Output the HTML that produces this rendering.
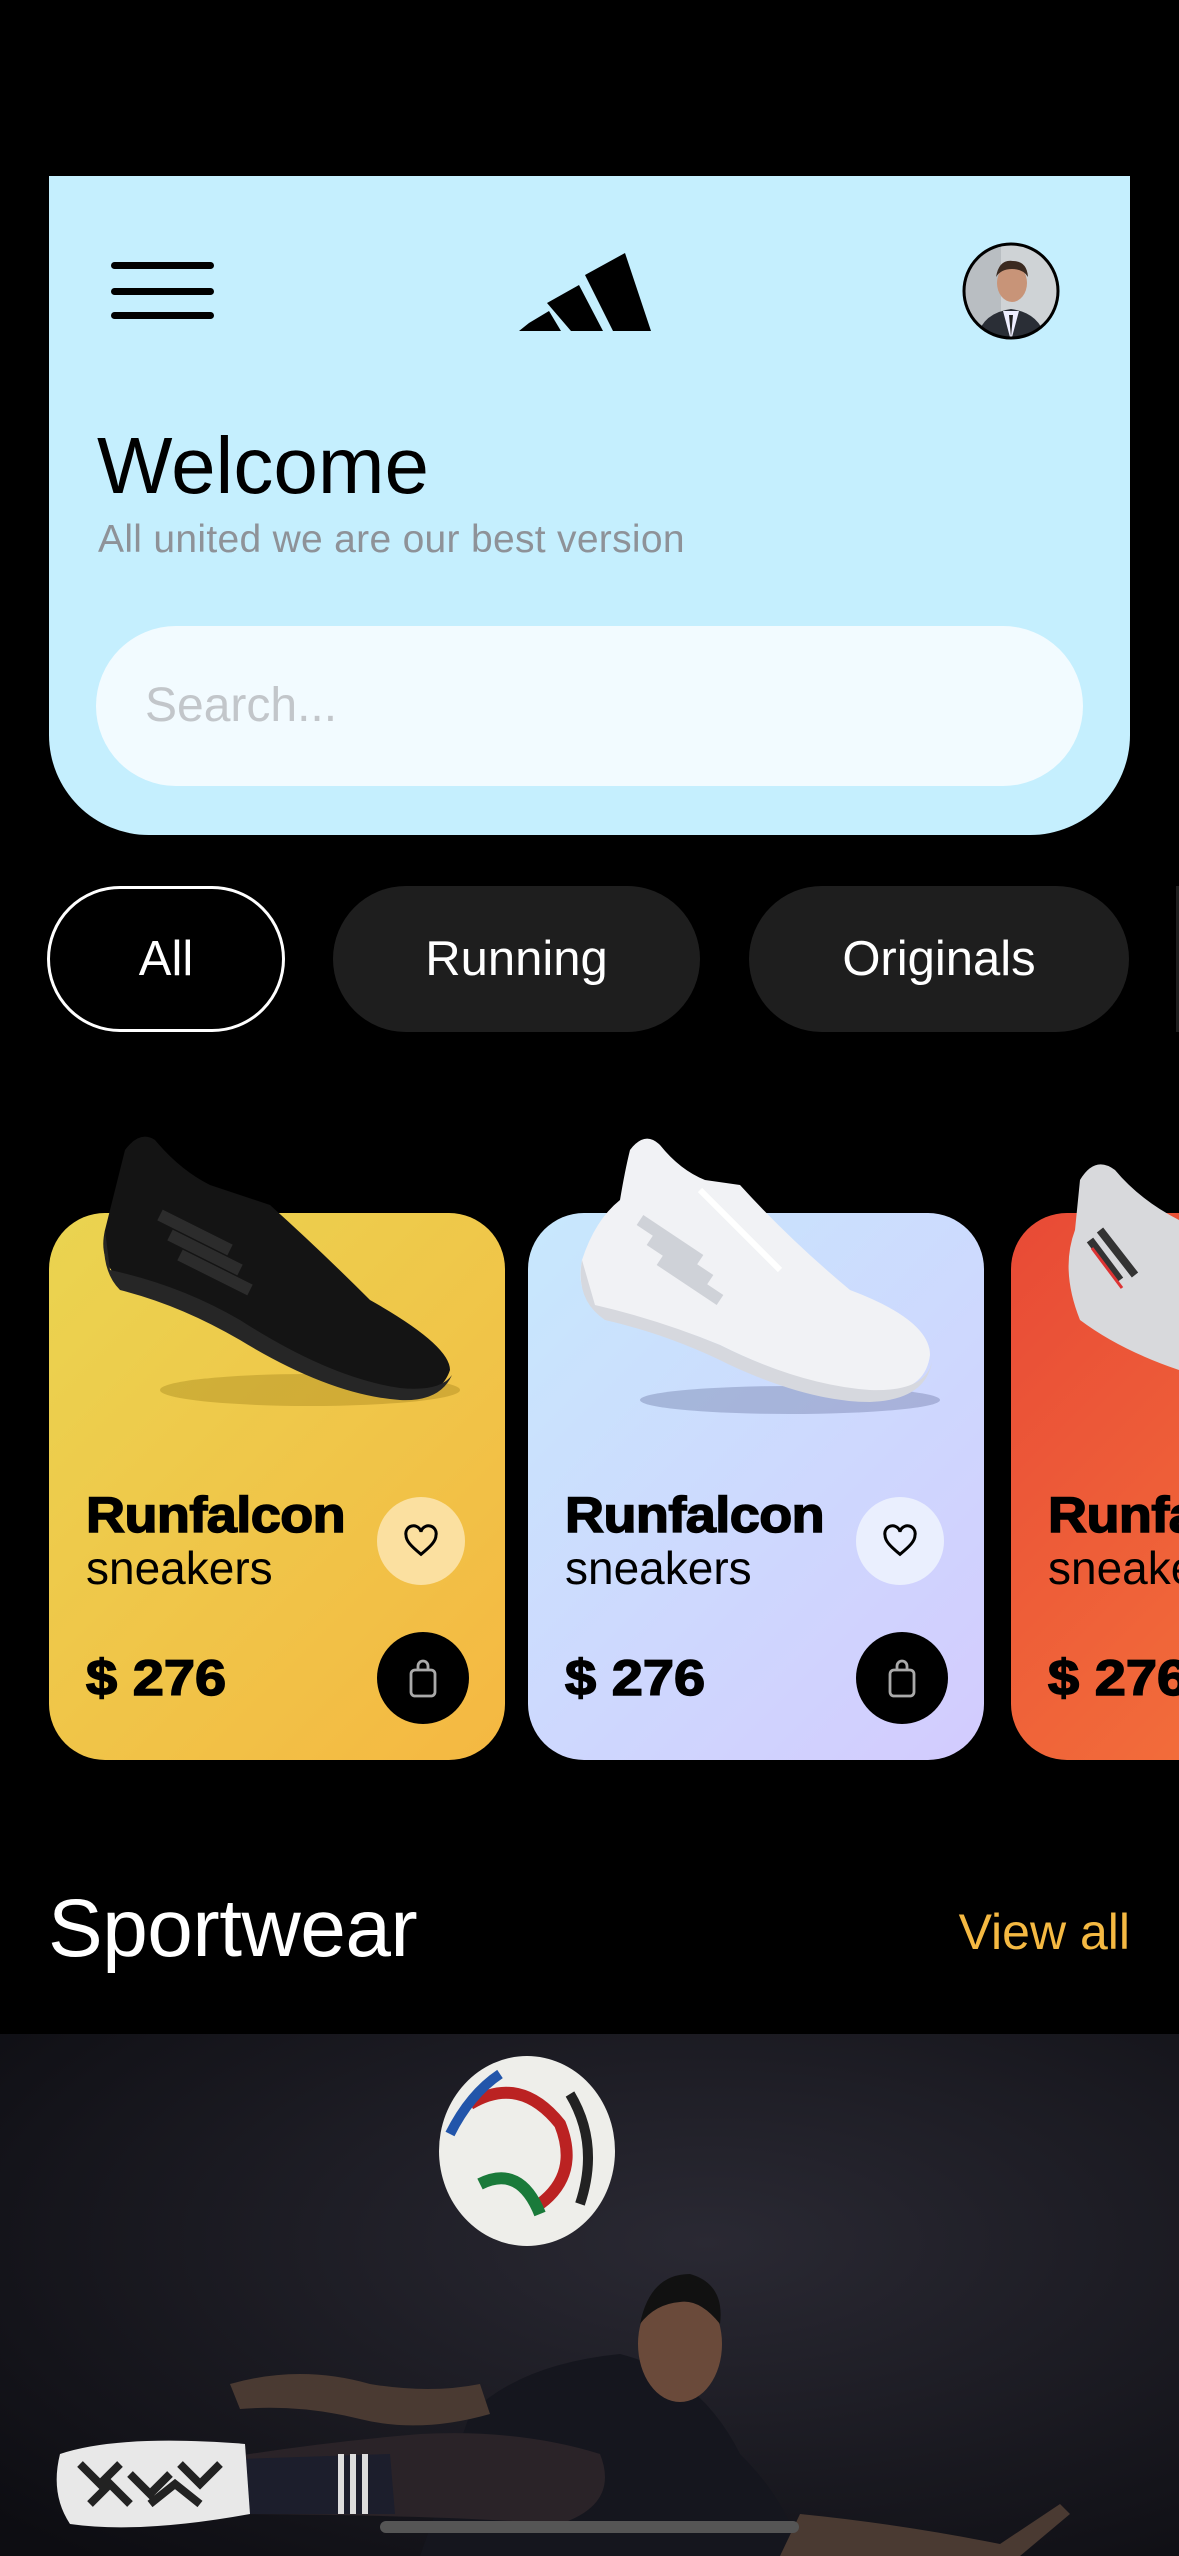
<!DOCTYPE html>
<html><head><meta charset="utf-8"><style>
*{margin:0;padding:0;box-sizing:border-box}
html,body{width:1179px;height:2556px;overflow:hidden;background:#000}
body{font-family:"Liberation Sans",sans-serif}
#w{position:relative;width:1179px;height:2556px;overflow:hidden}
.abs{position:absolute}
.hdr{left:49px;top:176px;width:1081px;height:659px;background:#c5effe;border-radius:0 0 100px 100px}
.bar{left:111px;width:103px;height:7px;background:#000;border-radius:4px}
.chip{top:886px;height:146px;border-radius:73px;background:#1e1e1e;color:#fff;font-size:49px;display:flex;align-items:center;justify-content:center}
.card{top:1213px;height:547px;width:456px;border-radius:56px;overflow:hidden}
.t1{font-size:50px;font-weight:bold;letter-spacing:-0.5px;position:absolute;left:37px;top:273px;transform:scaleX(1.08);transform-origin:left;-webkit-text-stroke:1.5px #000}
.t2{font-size:46px;position:absolute;left:37px;top:328px}
.pr{font-size:50px;font-weight:bold;position:absolute;left:37px;top:436px;transform:scaleX(1.12);transform-origin:left;-webkit-text-stroke:1.5px #000}
.hc{position:absolute;left:328px;top:284px;width:88px;height:88px;border-radius:50%;display:flex;align-items:center;justify-content:center}
.bc{position:absolute;left:328px;top:419px;width:92px;height:92px;border-radius:50%;background:#000;display:flex;align-items:center;justify-content:center}
</style></head><body><div id="w">
<div class="abs hdr"></div>
<div class="abs bar" style="top:262px"></div>
<div class="abs bar" style="top:288px"></div>
<div class="abs bar" style="top:312px"></div>
<svg class="abs" style="left:517px;top:253px" width="134" height="78" viewBox="0 0 134 78">
<polygon points="2,78 12,70 32,58 44,78" fill="#000"/>
<polygon points="30,50 62,32 86,78 54,78" fill="#000"/>
<polygon points="68,22 108,0 134,78 96,78" fill="#000"/>
</svg>
<svg class="abs" style="left:961px;top:241px" width="100" height="100" viewBox="0 0 100 100">
<defs><clipPath id="av"><circle cx="50" cy="50" r="46"/></clipPath></defs>
<g clip-path="url(#av)"><rect width="100" height="100" fill="#cfd3d6"/>
<rect x="0" y="0" width="40" height="100" fill="#b9bec2"/>
<path d="M15 100 Q20 72 50 68 Q80 72 85 100Z" fill="#2a2e36"/>
<path d="M42 70 L50 100 L58 70Z" fill="#eef"/><path d="M48 74 L50 96 L52 74Z" fill="#222"/>
<ellipse cx="51" cy="42" rx="15" ry="19" fill="#c89478"/>
<path d="M35 36 Q38 18 52 20 Q66 20 67 36 Q62 28 51 28 Q40 28 35 36Z" fill="#3b2a20"/></g>
<circle cx="50" cy="50" r="47" fill="none" stroke="#000" stroke-width="3"/>
</svg>
<div class="abs" style="left:97px;top:420px;font-size:80px;color:#000;letter-spacing:0px">Welcome</div>
<div class="abs" style="left:98px;top:518px;font-size:39px;color:#8e9298;letter-spacing:0.3px">All united we are our best version</div>
<div class="abs" style="left:96px;top:626px;width:987px;height:160px;border-radius:80px;background:#f2fbff"></div>
<div class="abs" style="left:145px;top:678px;font-size:48px;color:#c2c6ca">Search...</div>

<div class="abs chip" style="left:47px;width:238px;background:#000;border:3px solid #fff">All</div>
<div class="abs chip" style="left:333px;width:367px">Running</div>
<div class="abs chip" style="left:749px;width:380px">Originals</div>
<div class="abs chip" style="left:1176px;width:3px;border-radius:0"></div>

<div class="abs card" style="left:49px;background:linear-gradient(135deg,#ead450,#f5b842)">
<div class="t1">Runfalcon</div><div class="t2">sneakers</div><div class="pr">$ 276</div>
<div class="hc" style="background:#fbe0a0"><svg width="40" height="40" viewBox="0 0 24 24"><path d="M12 20 C6 15 3 12 3 8.5 A4.5 4.5 0 0 1 12 6.5 A4.5 4.5 0 0 1 21 8.5 C21 12 18 15 12 20Z" fill="none" stroke="#000" stroke-width="1.8"/></svg></div>
<div class="bc"><svg width="36" height="40" viewBox="0 0 18 20"><rect x="3" y="6" width="12" height="13" rx="2" fill="none" stroke="#aaa" stroke-width="1.4"/><path d="M6.5 6 V4 A2.5 2.5 0 0 1 11.5 4 V6" fill="none" stroke="#aaa" stroke-width="1.4"/></svg></div>
</div>
<div class="abs card" style="left:528px;background:linear-gradient(135deg,#c7e8fd,#d3cbfe)">
<div class="t1">Runfalcon</div><div class="t2">sneakers</div><div class="pr">$ 276</div>
<div class="hc" style="background:#eaeffe"><svg width="40" height="40" viewBox="0 0 24 24"><path d="M12 20 C6 15 3 12 3 8.5 A4.5 4.5 0 0 1 12 6.5 A4.5 4.5 0 0 1 21 8.5 C21 12 18 15 12 20Z" fill="none" stroke="#000" stroke-width="1.8"/></svg></div>
<div class="bc"><svg width="36" height="40" viewBox="0 0 18 20"><rect x="3" y="6" width="12" height="13" rx="2" fill="none" stroke="#aaa" stroke-width="1.4"/><path d="M6.5 6 V4 A2.5 2.5 0 0 1 11.5 4 V6" fill="none" stroke="#aaa" stroke-width="1.4"/></svg></div>
</div>
<div class="abs card" style="left:1011px;width:168px;border-radius:56px 0 0 56px;background:linear-gradient(135deg,#e84a36,#f26c3a)">
<div class="t1">Runfalcon</div><div class="t2">sneakers</div><div class="pr">$ 276</div>
</div>

<svg class="abs" style="left:80px;top:1130px" width="380" height="300" viewBox="0 0 380 300">
<ellipse cx="230" cy="260" rx="150" ry="16" fill="rgba(120,90,0,0.25)"/>
<path d="M45 20 Q60 0 75 10 Q100 40 130 55 L190 75 Q240 120 290 170 Q370 215 370 240 Q360 270 320 262 Q250 250 160 195 Q100 160 40 150 Q18 130 25 100 Q35 60 45 20Z" fill="#141414"/>
<path d="M25 100 Q20 140 40 160 Q100 175 160 210 Q250 265 320 270 Q360 272 372 245 Q360 262 320 258 Q250 248 160 190 Q100 155 30 140Z" fill="#262626"/>
<path d="M80 85 L150 120 M90 105 L160 140 M100 125 L170 160" stroke="#2c2c2c" stroke-width="12"/>
</svg>
<svg class="abs" style="left:570px;top:1130px" width="380" height="300" viewBox="0 0 380 300">
<ellipse cx="220" cy="270" rx="150" ry="14" fill="rgba(80,90,140,0.3)"/>
<path d="M60 20 Q75 0 90 15 Q110 40 135 50 L170 55 Q220 110 280 160 Q360 190 360 225 Q355 265 300 262 Q230 255 150 215 Q90 190 30 180 Q5 165 12 130 Q25 90 50 70 Q55 40 60 20Z" fill="#f1f2f5"/>
<path d="M12 130 Q5 170 35 190 Q100 205 160 235 Q240 272 300 272 Q355 270 362 232 Q355 262 300 260 Q230 255 150 215 Q90 190 25 175Z" fill="#d6d8de"/>
<path d="M70 90 L130 130 M80 110 L140 150 M90 130 L150 170" stroke="#cfd2d8" stroke-width="12"/>
<path d="M130 60 L210 140" stroke="#fff" stroke-width="6"/>
</svg>
<svg class="abs" style="left:1060px;top:1150px" width="119" height="230" viewBox="0 0 119 230">
<path d="M20 30 Q35 5 55 20 Q80 50 119 70 L119 220 Q60 200 20 170 Q0 120 15 80Z" fill="#d8d9dc"/>
<path d="M30 90 L60 130 M40 80 L75 125" stroke="#333" stroke-width="8"/>
<path d="M32 98 L62 138" stroke="#d33" stroke-width="3"/>
</svg>

<div class="abs" style="left:48px;top:1882px;font-size:82px;color:#fff;letter-spacing:-0.5px">Sportwear</div>
<div class="abs" style="right:49px;top:1903px;font-size:50px;color:#f5b942">View all</div>

<svg class="abs" style="left:0;top:2034px" width="1179" height="522" viewBox="0 0 1179 522">
<defs><radialGradient id="bg" cx="0.6" cy="0.4" r="0.8"><stop offset="0" stop-color="#2a2933"/><stop offset="1" stop-color="#0d0d12"/></radialGradient></defs>
<rect width="1179" height="522" fill="url(#bg)"/>
<ellipse cx="527" cy="117" rx="88" ry="95" fill="#eeeeea"/>
<path d="M470 70 Q520 40 560 90 Q580 140 540 170" fill="none" stroke="#b22" stroke-width="12"/>
<path d="M480 150 Q520 130 540 180" fill="none" stroke="#1a7a3a" stroke-width="12"/>
<path d="M450 100 Q470 60 500 40" fill="none" stroke="#2255aa" stroke-width="10"/>
<path d="M570 60 Q600 110 580 170" fill="none" stroke="#222" stroke-width="10"/>
<path d="M420 522 L470 380 Q520 330 620 320 Q700 340 740 420 Q790 470 800 522Z" fill="#15161e"/>
<path d="M230 350 Q300 330 370 350 Q430 360 480 350 L490 380 Q420 400 360 385 Q300 370 240 375Z" fill="#4a3a32"/>
<ellipse cx="680" cy="310" rx="42" ry="58" fill="#6a4a3a"/>
<path d="M640 290 Q650 240 690 240 Q725 250 720 290 Q700 265 680 268 Q655 270 640 290Z" fill="#111"/>
<path d="M190 430 Q300 410 420 400 Q520 395 600 420 Q620 470 560 490 Q420 480 200 480Z" fill="#2a2328"/>
<path d="M240 425 L390 420 L395 480 L245 480Z" fill="#1c1e2c"/>
<rect x="338" y="420" width="6" height="60" fill="#ddd"/><rect x="350" y="420" width="6" height="60" fill="#ddd"/><rect x="362" y="420" width="6" height="60" fill="#ddd"/>
<path d="M60 420 Q120 400 245 410 L250 480 Q140 500 70 490 Q50 460 60 420Z" fill="#e8e8e8"/>
<path d="M80 430 L100 450 L120 430 M130 440 L150 460 L170 440 M90 470 L110 450 L130 470 M150 470 L175 450 L200 470 M180 430 L200 450 L220 430" stroke="#222" stroke-width="8" fill="none"/>
<path d="M800 480 Q900 490 1000 510 L1060 470 L1070 480 L1020 522 L780 522Z" fill="#4a3a32"/>
</svg>
<div class="abs" style="left:380px;top:2521px;width:419px;height:12px;border-radius:6px;background:#555"></div>
</div></body></html>
